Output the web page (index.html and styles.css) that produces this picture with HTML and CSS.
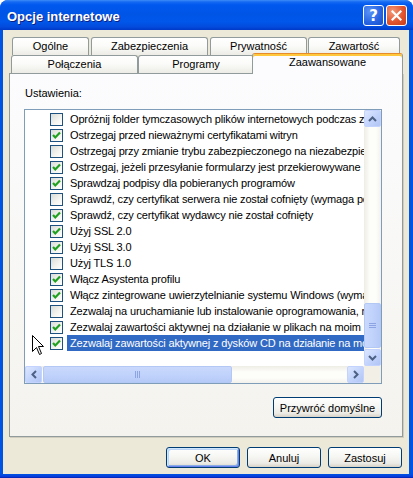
FILE: index.html
```html
<!DOCTYPE html>
<html lang="pl">
<head>
<meta charset="utf-8">
<title>Opcje internetowe</title>
<link rel="stylesheet" href="styles.css">
</head>
<body>
<div class="window">
  <div class="titlebar">
    <span class="title">Opcje internetowe</span>
    <div class="tb-buttons">
      <span class="tb-btn tb-help">?</span>
      <span class="tb-btn tb-close"><svg width="11" height="11" viewBox="0 0 11 11"><path d="M1.5 1.5 L9.5 9.5 M9.5 1.5 L1.5 9.5" stroke="#fff" stroke-width="2.2" stroke-linecap="square"/></svg></span>
    </div>
  </div>
  <div class="frame">
    <div class="body">
      <div class="tabs">
        <div class="tabrow row1">
          <div class="tab t-ogolne">Ogólne</div>
          <div class="tab t-zabezp">Zabezpieczenia</div>
          <div class="tab t-pryw">Prywatność</div>
          <div class="tab t-zaw">Zawartość</div>
        </div>
        <div class="tabrow row2">
          <div class="tab t-pol">Połączenia</div>
          <div class="tab t-prog">Programy</div>
          <div class="tab sel t-zaaw">Zaawansowane</div>
        </div>
      </div>
      <div class="panel">
        <div class="label">Ustawienia:</div>
        <div class="listbox">
          <div class="lb-main">
            <div class="items">
              <div class="row"><span class="cb"></span><span class="txt">Opróżnij folder tymczasowych plików internetowych podczas zamykania przeglądarki</span></div>
              <div class="row"><span class="cb on"><svg width="11" height="11" viewBox="0 0 11 11"><path d="M2 5 L4.3 7.5 L9 2.6" fill="none" stroke="#21A121" stroke-width="2.2"/></svg></span><span class="txt">Ostrzegaj przed nieważnymi certyfikatami witryn</span></div>
              <div class="row"><span class="cb"></span><span class="txt">Ostrzegaj przy zmianie trybu zabezpieczonego na niezabezpieczony</span></div>
              <div class="row"><span class="cb on"><svg width="11" height="11" viewBox="0 0 11 11"><path d="M2 5 L4.3 7.5 L9 2.6" fill="none" stroke="#21A121" stroke-width="2.2"/></svg></span><span class="txt">Ostrzegaj, jeżeli przesyłanie formularzy jest przekierowywane</span></div>
              <div class="row"><span class="cb on"><svg width="11" height="11" viewBox="0 0 11 11"><path d="M2 5 L4.3 7.5 L9 2.6" fill="none" stroke="#21A121" stroke-width="2.2"/></svg></span><span class="txt">Sprawdzaj podpisy dla pobieranych programów</span></div>
              <div class="row"><span class="cb"></span><span class="txt">Sprawdź, czy certyfikat serwera nie został cofnięty (wymaga ponownego uruchomienia)</span></div>
              <div class="row"><span class="cb on"><svg width="11" height="11" viewBox="0 0 11 11"><path d="M2 5 L4.3 7.5 L9 2.6" fill="none" stroke="#21A121" stroke-width="2.2"/></svg></span><span class="txt">Sprawdź, czy certyfikat wydawcy nie został cofnięty</span></div>
              <div class="row"><span class="cb on"><svg width="11" height="11" viewBox="0 0 11 11"><path d="M2 5 L4.3 7.5 L9 2.6" fill="none" stroke="#21A121" stroke-width="2.2"/></svg></span><span class="txt">Użyj SSL 2.0</span></div>
              <div class="row"><span class="cb on"><svg width="11" height="11" viewBox="0 0 11 11"><path d="M2 5 L4.3 7.5 L9 2.6" fill="none" stroke="#21A121" stroke-width="2.2"/></svg></span><span class="txt">Użyj SSL 3.0</span></div>
              <div class="row"><span class="cb"></span><span class="txt">Użyj TLS 1.0</span></div>
              <div class="row"><span class="cb on"><svg width="11" height="11" viewBox="0 0 11 11"><path d="M2 5 L4.3 7.5 L9 2.6" fill="none" stroke="#21A121" stroke-width="2.2"/></svg></span><span class="txt">Włącz Asystenta profilu</span></div>
              <div class="row"><span class="cb on"><svg width="11" height="11" viewBox="0 0 11 11"><path d="M2 5 L4.3 7.5 L9 2.6" fill="none" stroke="#21A121" stroke-width="2.2"/></svg></span><span class="txt">Włącz zintegrowane uwierzytelnianie systemu Windows (wymaga ponownego uruchomienia)</span></div>
              <div class="row"><span class="cb"></span><span class="txt">Zezwalaj na uruchamianie lub instalowanie oprogramowania, nawet jeśli podpis jest nieprawidłowy</span></div>
              <div class="row"><span class="cb on"><svg width="11" height="11" viewBox="0 0 11 11"><path d="M2 5 L4.3 7.5 L9 2.6" fill="none" stroke="#21A121" stroke-width="2.2"/></svg></span><span class="txt">Zezwalaj zawartości aktywnej na działanie w plikach na moim komputerze</span></div>
              <div class="row selected"><span class="cb on"><svg width="11" height="11" viewBox="0 0 11 11"><path d="M2 5 L4.3 7.5 L9 2.6" fill="none" stroke="#21A121" stroke-width="2.2"/></svg></span><span class="txt">Zezwalaj zawartości aktywnej z dysków CD na działanie na moim komputerze</span></div>
            </div>
            <div class="vscroll">
              <div class="sbtn"><svg width="9" height="6" viewBox="0 0 9 6"><path d="M1 5 L4.5 1.5 L8 5" fill="none" stroke="#4D6185" stroke-width="2"/></svg></div>
              <div class="vtrack">
                <div class="vthumb"><svg width="7" height="7" viewBox="0 0 7 7"><path d="M0 1.5 H7 M0 3.5 H7 M0 5.5 H7" stroke="#8CA4E4" stroke-width="1"/></svg></div>
              </div>
              <div class="sbtn"><svg width="9" height="6" viewBox="0 0 9 6"><path d="M1 1 L4.5 4.5 L8 1" fill="none" stroke="#4D6185" stroke-width="2"/></svg></div>
            </div>
          </div>
          <div class="lb-bottom">
            <div class="hscroll">
              <div class="sbtn"><svg width="6" height="9" viewBox="0 0 6 9"><path d="M5 1 L1.5 4.5 L5 8" fill="none" stroke="#4D6185" stroke-width="2"/></svg></div>
              <div class="htrack">
                <div class="hthumb"><svg width="7" height="7" viewBox="0 0 7 7"><path d="M1.5 0 V7 M3.5 0 V7 M5.5 0 V7" stroke="#8CA4E4" stroke-width="1"/></svg></div>
              </div>
              <div class="sbtn"><svg width="6" height="9" viewBox="0 0 6 9"><path d="M1 1 L4.5 4.5 L1 8" fill="none" stroke="#4D6185" stroke-width="2"/></svg></div>
            </div>
            <div class="corner"></div>
          </div>
        </div>
        <div class="restore-row"><button class="btn restore">Przywróć domyślne</button></div>
      </div>
      <div class="buttons">
        <button class="btn default">OK</button>
        <button class="btn">Anuluj</button>
        <button class="btn">Zastosuj</button>
      </div>
    </div>
  </div>
  <svg class="cursor" width="13" height="21" viewBox="0 0 13 21"><path d="M0.5 0.5 L0.5 16.5 L4.5 12.5 L7.5 19.5 L9.5 18.5 L6.5 11.5 L11.5 11.5 Z" fill="#fff" stroke="#000" stroke-width="1"/></svg>
</div>
</body>
</html>
```

FILE: styles.css
```css
* { box-sizing: border-box; }
html, body { margin: 0; background: #fff; }
body {
  font-family: "Liberation Sans", Arial, sans-serif;
  font-size: 11px;
  color: #000;
}
.window {
  position: relative;
  width: 413px;
  height: 478px;
  border-radius: 8px 8px 0 0;
  overflow: hidden;
  background: #0054E3;
  display: flex;
  flex-direction: column;
}
.titlebar {
  height: 30px;
  flex: none;
  display: flex;
  align-items: center;
  padding: 0 6px 0 7px;
  background: linear-gradient(#3D8DF8 0, #1468F2 2px, #0058EE 5px, #0055E6 14px, #0057EA 22px, #034ADB 27px, #0039C8 30px);
}
.title {
  color: #fff;
  font-weight: bold;
  font-size: 13px;
  text-shadow: 1px 1px 0 #0F1F7E;
  margin-top: 2px;
}
.tb-buttons {
  margin-left: auto;
  display: flex;
  gap: 2px;
  margin-top: 1px;
}
.tb-btn {
  width: 21px;
  height: 21px;
  border: 1px solid #fff;
  border-radius: 3px;
  display: flex;
  align-items: center;
  justify-content: center;
}
.tb-help {
  background: radial-gradient(circle at 30% 30%, #5A93F5, #2663E2 60%, #1A4FC8);
  color: #fff;
  font-weight: bold;
  font-size: 15px;
  font-family: "DejaVu Sans", sans-serif;
}
.tb-close {
  background: radial-gradient(circle at 30% 30%, #F29A7A, #E2552F 55%, #C83C15);
}
.frame {
  flex: 1;
  min-height: 0;
  display: flex;
  padding: 0 4px 4px 3px;
  background: linear-gradient(to top, #001A9E 0, #0838D9 1px, #0054E3 4px);
}
.body {
  width: 406px;
  min-width: 0;
  flex: none;
  background: #ECE9D8;
  padding: 7px 6px 6px 6px;
  display: flex;
  flex-direction: column;
}
.tabs { display: flex; flex-direction: column; }
.tabrow {
  display: flex;
  height: 18px;
  align-items: flex-end;
}
.row1 { padding-left: 3px; }
.row2 { padding-left: 2px; }
.tab {
  flex: none;
  height: 18px;
  line-height: 13px;
  border: 1px solid #919B9C;
  border-bottom: none;
  border-radius: 3px 3px 0 0;
  background: linear-gradient(#FFFFFF, #FBFBF9 45%, #EDECE6);
  display: flex;
  align-items: center;
  justify-content: center;
}
.t-ogolne { width: 77px; margin-right: 2px; }
.t-zabezp { width: 117px; margin-right: 2px; }
.t-pryw { width: 97px; margin-right: 1px; }
.t-zaw { width: 92px; }
.t-pol { width: 127px; }
.t-prog { width: 116px; }
.tab.sel {
  width: 151px;
  height: 21px;
  margin-left: -2px;
  margin-bottom: -1px;
  position: relative;
  z-index: 1;
  align-items: flex-start;
  padding-top: 2px;
  border-top: 1px solid #E68B2C;
  background: #FCFCFE;
  box-shadow: inset 0 2px 0 #FFC83C;
}
.panel {
  width: 394px;
  min-width: 0;
  height: 364px;
  border: 1px solid #919B9C;
  background: linear-gradient(#FCFCFE, #F4F3EE);
  box-shadow: 1px 1px 0 #D0CDBE;
  padding: 13px 20px 18px 14px;
  display: flex;
  flex-direction: column;
}
.label {
  line-height: 13px;
  padding-left: 1px;
  margin-bottom: 9px;
}
.listbox {
  width: 358px;
  min-width: 0;
  height: 275px;
  border: 1px solid #7F9DB9;
  background: #fff;
  display: flex;
  flex-direction: column;
}
.lb-main { height: 256px; min-width: 0; display: flex; }
.items {
  width: 339px;
  flex: none;
  overflow: hidden;
  padding-top: 1px;
}
.row {
  height: 16px;
  display: flex;
  align-items: center;
  white-space: nowrap;
}
.cb {
  flex: none;
  width: 13px;
  height: 13px;
  margin-left: 25px;
  margin-right: 4px;
  border: 1px solid #1C5180;
  background: linear-gradient(135deg, #DCDCD7, #F4F4F0 60%, #FFFFFF);
  display: flex;
  align-items: center;
  justify-content: center;
}
.txt {
  flex: none;
  padding: 0 3px;
  line-height: 16px;
  letter-spacing: -0.15px;
}
.row.selected .txt {
  background: #316AC5;
  color: #fff;
}
.vscroll {
  width: 17px;
  flex: none;
  display: flex;
  flex-direction: column;
  background: linear-gradient(to right, #EEEDE5, #FDFDFA 35%, #FDFDFA 70%, #F3F1EC);
}
.sbtn {
  width: 17px;
  height: 17px;
  flex: none;
  border: 1px solid #C3D3FD;
  border-radius: 2px;
  background: linear-gradient(135deg, #DCE6FE, #C4D5FC 50%, #B1C5F5);
  display: flex;
  align-items: center;
  justify-content: center;
}
.vtrack {
  flex: 1;
  display: flex;
  flex-direction: column;
  justify-content: flex-end;
  padding-bottom: 1px;
}
.vthumb {
  height: 45px;
  border: 1px solid #B4C8F6;
  border-radius: 2px;
  background: linear-gradient(to right, #C9D8FC, #C1D3FB 50%, #B6CAF8);
  display: flex;
  align-items: center;
  justify-content: center;
}
.lb-bottom { height: 17px; display: flex; }
.hscroll {
  width: 339px;
  flex: none;
  display: flex;
  background: linear-gradient(#EEEDE5, #FDFDFA 35%, #FDFDFA 70%, #F3F1EC);
}
.htrack {
  flex: 1;
  display: flex;
  padding-left: 1px;
}
.hthumb {
  width: 189px;
  border: 1px solid #B4C8F6;
  border-radius: 2px;
  background: linear-gradient(#C9D8FC, #C1D3FB 50%, #B6CAF8);
  display: flex;
  align-items: center;
  justify-content: center;
}
.corner { width: 17px; flex: none; background: #F1EFE6; }
.restore-row {
  margin-top: 13px;
  display: flex;
  justify-content: flex-end;
}
.btn {
  font-family: "Liberation Sans", Arial, sans-serif;
  font-size: 11px;
  color: #000;
  height: 21px;
  padding: 0;
  border: 1px solid #003C74;
  border-radius: 3px;
  background: linear-gradient(#FFFFFF, #F6F6F3 45%, #ECEBE6 80%, #D8D2C6);
}
.restore { width: 109px; }
.buttons {
  margin-top: 10px;
  display: flex;
  justify-content: flex-end;
  gap: 7px;
  padding-right: 1px;
}
.buttons .btn { width: 74px; }
.btn.default {
  box-shadow: inset 1px 1px 0 #CEE7FF, inset -1px -1px 0 #6982EE, inset 2px 2px 0 #BCD4F6, inset -2px -2px 0 #89ADE4;
}
.cursor {
  position: absolute;
  left: 32px;
  top: 335px;
}
```
